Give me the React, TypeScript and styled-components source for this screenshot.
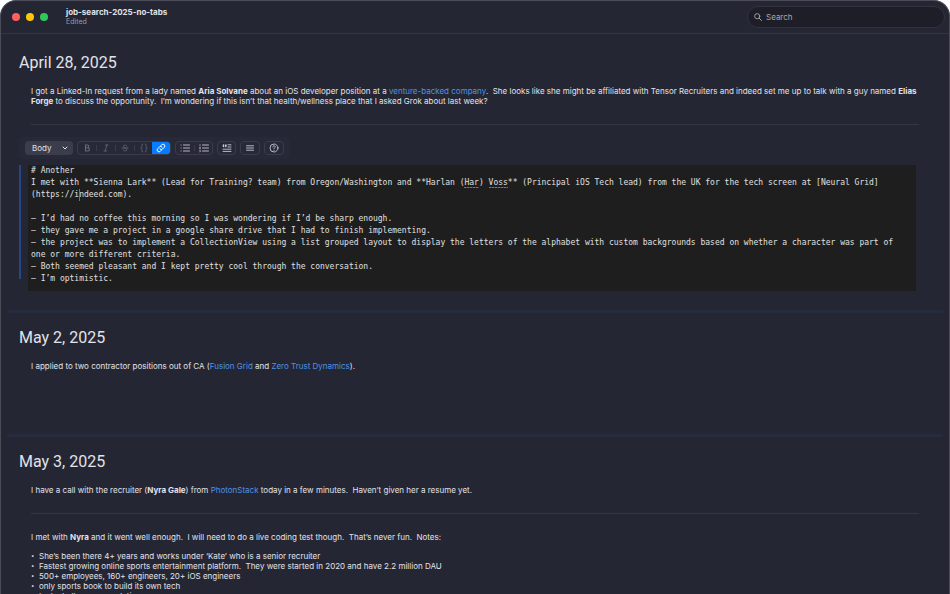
import React from "react";
import styled, { createGlobalStyle, css } from "styled-components";

const GlobalStyle = createGlobalStyle`
  * { box-sizing: border-box; }
  html, body, #root { height: 100%; }
  body {
    margin: 0;
    overflow: hidden;
    background: linear-gradient(90deg, #ffffff 0, #ffffff 12px, #3d3d49 24px, #3d3d49 calc(100% - 24px), #ffffff calc(100% - 12px));
    color: #e2e2e8;
    font-family: Inter, "Liberation Sans", sans-serif;
    font-size: 8px;
    line-height: 10px;
  }
  button, input, select, textarea { font: inherit; color: inherit; }
`;

const Window = styled.div`
  display: flex;
  flex-direction: column;
  height: 100%;
  background: #252633;
  border: 1px solid #4b4c58;
  border-bottom: 0;
  border-radius: 16px 16px 0 0;
  overflow: hidden;
`;

const TitleBar = styled.header`
  display: flex;
  align-items: center;
  flex: none;
  height: 33px;
  padding: 0 4px 0 11px;
  border-bottom: 1px solid #343541;
`;

const Lights = styled.div`
  display: flex;
  gap: 6px;
`;

const Light = styled.button<{ $color: string }>`
  width: 8px;
  height: 8px;
  padding: 0;
  border: 0;
  border-radius: 50%;
  background: ${(p) => p.$color};
`;

const TitleBlock = styled.div`
  margin-left: 18px;
  flex: 1;
`;

const Title = styled.h1`
  margin: 0;
  font-size: 8px;
  line-height: 9px;
  font-weight: 700;
`;

const Subtitle = styled.p`
  margin: 0;
  font-size: 7px;
  line-height: 9px;
  color: #9a9aa4;
`;

const SearchBox = styled.label`
  display: flex;
  align-items: center;
  gap: 4px;
  width: 198px;
  height: 22px;
  padding: 0 6px;
  border: 1px solid #32333e;
  border-radius: 11px;
  background: #1e1e28;
  color: #b4b4bc;
`;

const SearchInput = styled.input`
  flex: 1;
  min-width: 0;
  padding: 0;
  border: 0;
  outline: 0;
  background: none;
  &::placeholder { color: #a8a8b0; opacity: 1; }
`;

const Journal = styled.main`
  flex: 1;
  min-height: 0;
  overflow: hidden;
  padding: 0 6px;
`;

const Entry = styled.article<{ $first?: boolean }>`
  padding: ${(p) => (p.$first ? 18 : 14)}px 24px 0 12px;
  min-height: ${(p) => (p.$first ? 279 : 124)}px;
  border-bottom: 3px solid #272b3e;
`;

const DateHeading = styled.h2`
  margin: 0 0 12px;
  font-family: Roboto, "Liberation Sans", sans-serif;
  font-size: 16px;
  line-height: 22px;
  font-weight: 400;
`;

const Paragraph = styled.p`
  margin: 0 0 0 12px;
  white-space: pre-wrap;
`;

const Rule = styled.hr`
  margin: 18px 0 12px 12px;
  border: 0;
  border-top: 1px solid #353642;
`;

const NoteRule = styled(Rule)`
  margin-bottom: 18px;
`;

const Link = styled.a`
  color: #4a94e6;
  text-decoration: none;
`;

const Bullets = styled.ul`
  margin: 9px 0 0 12px;
  padding: 0;
  list-style: none;
`;

const Bullet = styled.li`
  display: flex;
  white-space: pre-wrap;
  &::before {
    content: "•";
    width: 8px;
    font-size: 6px;
  }
`;

const Toolbar = styled.div`
  display: flex;
  align-items: center;
  width: max-content;
  height: 22px;
  padding: 0 6px;
  gap: 4px;
  border-radius: 4px;
  background: #272938;
`;

const StyleMenu = styled.label`
  display: grid;
  align-items: center;
  width: 48px;
  height: 14px;
  border-radius: 4px;
  background: #3c3d4b;
  & > * { grid-area: 1 / 1; }
  & > svg { justify-self: end; margin-right: 4px; pointer-events: none; }
`;

const StyleSelect = styled.select`
  width: 100%;
  height: 14px;
  padding: 0 7px;
  border: 0;
  appearance: none;
  background: none;
`;

const ButtonGroup = styled.div`
  display: flex;
  height: 14px;
  border: 1px solid #3b3c49;
  border-radius: 4px;
  overflow: hidden;
`;

const ToolButton = styled.button<{ $active?: boolean; $muted?: boolean; $narrow?: boolean }>`
  display: grid;
  place-items: center;
  width: ${(p) => (p.$narrow ? 17 : 18)}px;
  height: 12px;
  padding: 0;
  border: 0;
  background: ${(p) => (p.$active ? "#087cff" : "transparent")};
  color: ${(p) => (p.$active ? "#ffffff" : p.$muted ? "#686975" : "#c8c8d0")};
`;

const Divider = styled.span`
  width: 1px;
  height: 6px;
  margin-top: 3px;
  background: #3b3c49;
`;

const EditorRow = styled.div`
  display: flex;
  gap: 7px;
  margin: 6px -10px 0 0;
  padding-right: 13px;
`;

const ChangeBar = styled.div`
  width: 2px;
  margin-bottom: 12px;
  background: #254882;
`;

const EditorPane = styled.div`
  flex: 1;
  padding: 0 3px;
  background: #1e1e1e;
`;

const monoText = css`
  font-family: "DejaVu Sans Mono", monospace;
  font-size: 8px;
`;

const EditorSurface = styled.div`
  position: relative;
  ${monoText}
`;

const Source = styled.textarea`
  ${monoText}
  display: block;
  width: 100%;
  height: 126px;
  padding: 0;
  border: 0;
  outline: 0;
  resize: none;
  overflow: hidden;
  background: none;
  line-height: 12px;
  color: #e0e0e0;
`;

const Squiggle = styled.span<{ $line: number; $column: number; $length: number }>`
  position: absolute;
  z-index: 1;
  left: ${(p) => p.$column}ch;
  top: ${(p) => p.$line * 12 + 10}px;
  width: ${(p) => p.$length}ch;
  height: 1px;
  background: repeating-linear-gradient(90deg, #f0483e 0 2px, #7a2b27 2px 3px);
  pointer-events: none;
`;

const Caret = styled.span<{ $line: number; $column: number }>`
  position: absolute;
  left: ${(p) => p.$column}ch;
  top: ${(p) => p.$line * 12}px;
  width: 1px;
  height: 12px;
  background: #3478f6;
  pointer-events: none;
`;

const source = `# Another
I met with **Sienna Lark** (Lead for Training? team) from Oregon/Washington and **Harlan (Har) Voss** (Principal iOS Tech lead) from the UK for the tech screen at [Neural Grid]
(https://indeed.com).

– I’d had no coffee this morning so I was wondering if I’d be sharp enough.
– they gave me a project in a google share drive that I had to finish implementing.
– the project was to implement a CollectionView using a list grouped layout to display the letters of the alphabet with custom backgrounds based on whether a character was part of
one or more different criteria.
– Both seemed pleasant and I kept pretty cool through the conversation.
– I’m optimistic.`;

const secondLine = source.split("\n")[1];

const Icon = ({ width = 10, height = 10, children }: { width?: number; height?: number; children: React.ReactNode }) => (
  <svg width={width} height={height} viewBox={`0 0 ${width} ${height}`} fill="none" stroke="currentColor" strokeLinecap="round" aria-hidden="true">
    {children}
  </svg>
);

export default function App() {
  return (
    <>
      <GlobalStyle />
      <Window>
        <TitleBar>
          <Lights>
            <Light $color="#ff5f5e" aria-label="Close" />
            <Light $color="#fec80a" aria-label="Minimize" />
            <Light $color="#30c85a" aria-label="Zoom" />
          </Lights>
          <TitleBlock>
            <Title>job-search-2025-no-tabs</Title>
            <Subtitle>Edited</Subtitle>
          </TitleBlock>
          <SearchBox>
            <Icon width={8} height={8}>
              <circle cx="3.2" cy="3.2" r="2.6" strokeWidth="0.8" />
              <path d="M5.2 5.2 7.5 7.5" strokeWidth="0.9" />
            </Icon>
            <SearchInput type="search" placeholder="Search" aria-label="Search" />
          </SearchBox>
        </TitleBar>
        <Journal>
          <Entry $first>
            <DateHeading>April 28, 2025</DateHeading>
            <Paragraph>
              I got a Linked-In request from a lady named <b>Aria Solvane</b> about an iOS developer position at a{" "}
              <Link href="#company">venture-backed company</Link>
              {".  She looks like she might be affiliated with Tensor Recruiters and indeed set me up to talk with a guy named "}
              <b>Elias Forge</b>
              {" to discuss the opportunity.  I’m wondering if this isn’t that health/wellness place that I asked Grok about last week?"}
            </Paragraph>
            <Rule />
            <Toolbar role="toolbar" aria-label="Formatting">
              <StyleMenu>
                <StyleSelect aria-label="Text style">
                  <option>Body</option>
                </StyleSelect>
                <Icon width={8} height={8}><path d="M2 3l2 2 2-2" /></Icon>
              </StyleMenu>
              <ButtonGroup>
                <ToolButton $muted aria-label="Bold"><Icon><path d="M3.5 2v6h2.3a1.6 1.6 0 0 0 0-3.2H3.5h2a1.4 1.4 0 0 0 0-2.8z" strokeWidth="1.1" /></Icon></ToolButton>
                <Divider />
                <ToolButton $muted aria-label="Italic"><Icon><path d="M4.5 2h2.5M3 8h2.5M5.8 2 4.2 8" strokeWidth="0.8" /></Icon></ToolButton>
                <Divider />
                <ToolButton $muted aria-label="Strikethrough"><Icon><path d="M6.8 3.2C6.5 1.6 3.4 1.6 3.4 3.4 3.4 5.3 6.9 4.6 6.9 6.6 6.9 8.5 3.4 8.5 3.1 6.8M2 5h6" strokeWidth="0.8" /></Icon></ToolButton>
                <Divider />
                <ToolButton $muted $narrow aria-label="Code"><Icon><path d="M3.8 1C2.2 1 3 2.2 3 3.4 3 4.5 2.6 5 1.6 5c1 0 1.4.5 1.4 1.6C3 7.8 2.2 9 3.8 9M6.2 1C7.8 1 7 2.2 7 3.4 7 4.5 7.4 5 8.4 5 7.4 5 7 5.5 7 6.6 7 7.8 7.8 9 6.2 9" strokeWidth="0.8" /></Icon></ToolButton>
                <ToolButton $active aria-label="Link" aria-pressed="true"><Icon><path d="M4 6a1.8 1.8 0 0 0 2.6 0l1.7-1.7a1.8 1.8 0 0 0-2.6-2.6L4.8 2.6M6 4a1.8 1.8 0 0 0-2.6 0L1.7 5.7a1.8 1.8 0 0 0 2.6 2.6l.9-.9" /></Icon></ToolButton>
              </ButtonGroup>
              <ButtonGroup>
                <ToolButton aria-label="Bulleted list"><Icon><path d="M3.5 2h6M3.5 5h6M3.5 8h6M1 2h.1M1 5h.1M1 8h.1" strokeWidth="0.9" /></Icon></ToolButton>
                <Divider />
                <ToolButton $narrow aria-label="Numbered list"><Icon><path d="M3.5 2h6M3.5 5h6M3.5 8h6" strokeWidth="0.9" /><path d="M1 1.2v1.6M.6 4.3h.8v.7H.6v.7h.8M.6 7.3h.8v1.5H.6" strokeWidth="0.6" /></Icon></ToolButton>
              </ButtonGroup>
              <ButtonGroup>
                <ToolButton $narrow aria-label="Block quote"><Icon><path d="M6 1.8h3M6 4h3M1 6.2h8M1 8.4h8" strokeWidth="0.9" /><path d="M1.5 2v1.5M3.8 2v1.5" strokeWidth="1.6" /></Icon></ToolButton>
              </ButtonGroup>
              <ButtonGroup>
                <ToolButton aria-label="Horizontal rule"><Icon><path d="M1.5 2.8h7M1.5 5h7M1.5 7.2h7" strokeWidth="0.9" /></Icon></ToolButton>
              </ButtonGroup>
              <ButtonGroup>
                <ToolButton aria-label="Help"><Icon><circle cx="5" cy="5" r="4" strokeWidth="0.9" /><path d="M3.8 4c0-1.7 2.5-1.6 2.5-.1C6.3 4.8 5 4.8 5 5.8M5 7.3v.1" strokeWidth="0.9" /></Icon></ToolButton>
              </ButtonGroup>
            </Toolbar>
            <EditorRow>
              <ChangeBar />
              <EditorPane>
                <EditorSurface>
                  <Source aria-label="Entry source" defaultValue={source} spellCheck={false} />
                  <Squiggle $line={1} $column={secondLine.indexOf("Har)")} $length={3} />
                  <Squiggle $line={1} $column={secondLine.indexOf("Voss")} $length={4} />
                  <Caret $line={2} $column={10} />
                </EditorSurface>
              </EditorPane>
            </EditorRow>
          </Entry>
          <Entry>
            <DateHeading>May 2, 2025</DateHeading>
            <Paragraph>
              I applied to two contractor positions out of CA (<Link href="#fusion">Fusion Grid</Link> and{" "}
              <Link href="#zero">Zero Trust Dynamics</Link>).
            </Paragraph>
          </Entry>
          <Entry>
            <DateHeading>May 3, 2025</DateHeading>
            <Paragraph>
              I have a call with the recruiter (<b>Nyra Gale</b>) from <Link href="#photon">PhotonStack</Link>
              {" today in a few minutes.  Haven’t given her a resume yet."}
            </Paragraph>
            <NoteRule />
            <Paragraph>
              I met with <b>Nyra</b>
              {" and it went well enough.  I will need to do a live coding test though.  That’s never fun.  Notes:"}
            </Paragraph>
            <Bullets>
              <Bullet>She’s been there 4+ years and works under ‘Kate’ who is a senior recruiter</Bullet>
              <Bullet>{"Fastest growing online sports entertainment platform.  They were started in 2020 and have 2.2 million DAU"}</Bullet>
              <Bullet>500+ employees, 160+ engineers, 20+ iOS engineers</Bullet>
              <Bullet>only sports book to build its own tech</Bullet>
              <Bullet>tech challenges, regulation</Bullet>
            </Bullets>
          </Entry>
        </Journal>
      </Window>
    </>
  );
}
